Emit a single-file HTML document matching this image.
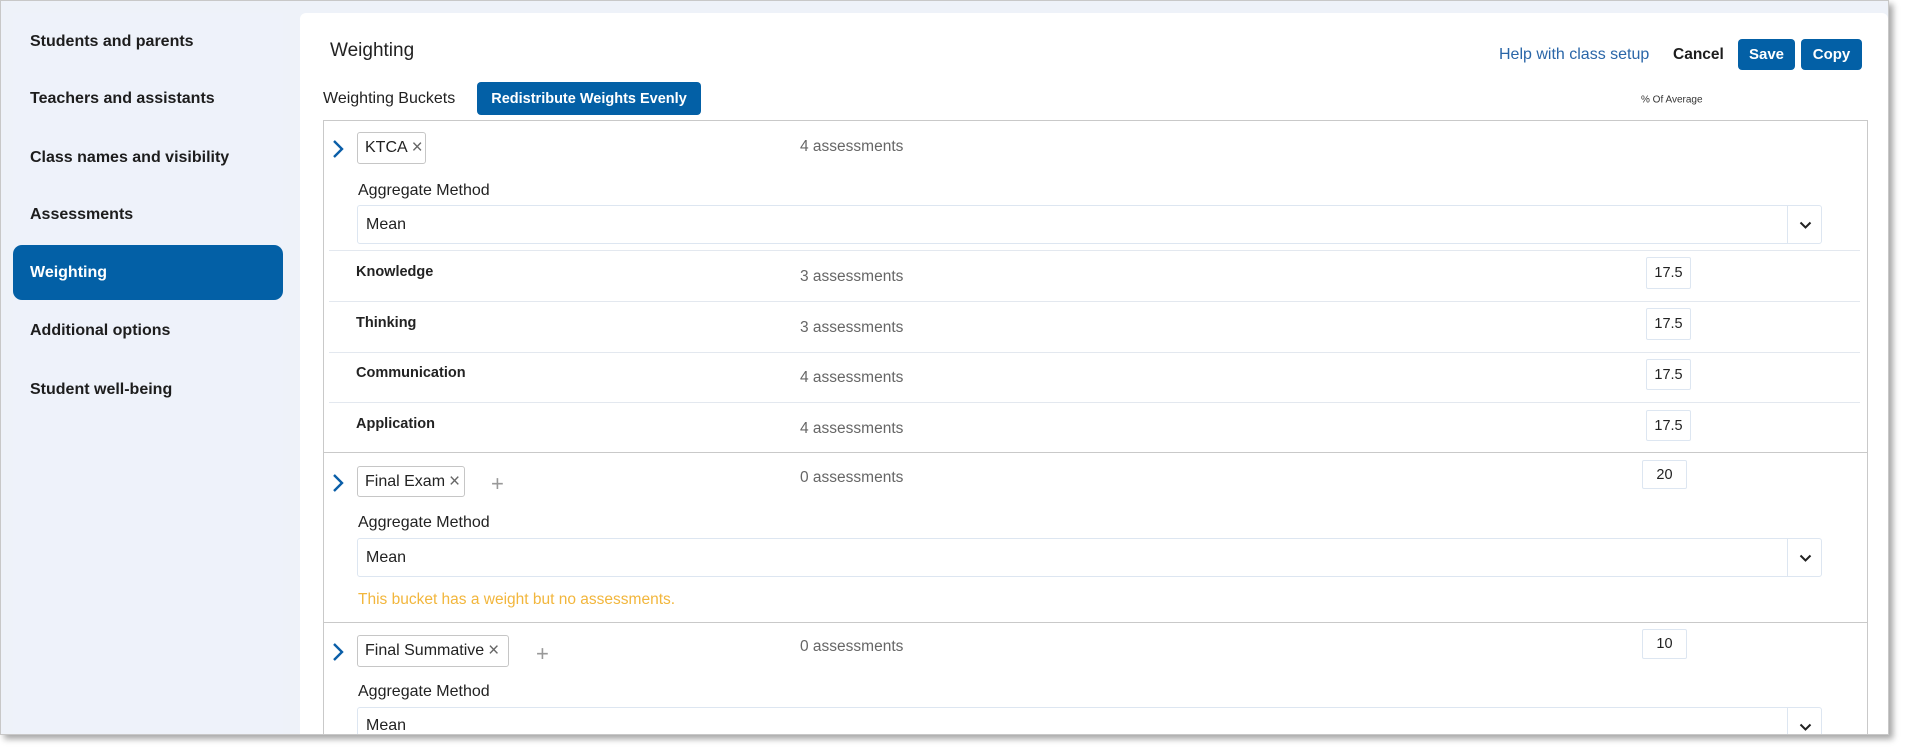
<!DOCTYPE html>
<html><head><meta charset="utf-8"><style>
*{box-sizing:border-box;margin:0;padding:0}
body{width:1905px;height:751px;background:#fff;position:relative;overflow:hidden;font-family:"Liberation Sans",sans-serif;color:#1f2328}
.frame{position:absolute;left:0;top:0;width:1889px;height:735px;background:#eef2f9;border:1px solid #c8c8c8;box-shadow:4px 4px 6px rgba(0,0,0,.35);overflow:hidden}
.a{position:absolute;white-space:nowrap}
.side{position:absolute;left:12px;top:12px;width:270px;height:730px;background:#eef2fa}
.nav{position:absolute;left:29px;font-size:16px;font-weight:bold;color:#1d1d1d;transform:translateY(-50%)}
.active{position:absolute;left:12px;top:244px;width:270px;height:55px;background:#0360a6;border-radius:9px}
.main{position:absolute;left:299px;top:12px;width:1588px;height:740px;background:#fff;border-radius:6px}
.btn{position:absolute;background:#0360a6;color:#fff;font-weight:bold;border-radius:4px;display:flex;align-items:center;justify-content:center}
.tbl{position:absolute;left:322px;top:119px;width:1545px;height:640px;border:1px solid #c9c9c9}
.c{transform:translateY(-50%)}
.tag{position:absolute;left:356px;border:1px solid #c6c6c6;border-radius:3px;background:#fff;font-size:16px;color:#222;display:flex;align-items:center;padding-left:7px}
.tag span{color:#666;font-size:19px;margin-left:4px}
.gray{color:#666;font-size:15.5px}
.lab{font-size:16px;color:#222}
.sel{position:absolute;left:356px;width:1465px;border:1px solid #dde6f1;border-radius:3px;font-size:16px;color:#222;padding-left:8px;display:flex;align-items:center}
.sel .dd{position:absolute;right:0;top:0;bottom:0;width:34px;border-left:1px solid #dde6f1}
.sep{position:absolute;left:328px;width:1531px;height:1px;background:#e3e8ef}
.bsep{position:absolute;left:322px;width:1545px;height:1px;background:#c9c9c9}
.inp{position:absolute;border:1px solid #dde6f1;border-radius:2px;font-size:14.5px;color:#222;display:flex;align-items:center;justify-content:center}
.cat{font-size:14.5px;font-weight:bold;color:#222}
.plus{font-size:22px;color:#999}
</style></head><body>
<div class="frame">
<div class="side"></div>
<div class="active"></div>
<div class="nav" style="top:41px">Students and parents</div>
<div class="nav" style="top:98px">Teachers and assistants</div>
<div class="nav" style="top:157px">Class names and visibility</div>
<div class="nav" style="top:214px">Assessments</div>
<div class="nav" style="top:272px;color:#fff">Weighting</div>
<div class="nav" style="top:330px">Additional options</div>
<div class="nav" style="top:389px">Student well-being</div>

<div class="main"></div>
<div class="a c" style="left:329px;top:50px;font-size:19px;color:#222">Weighting</div>
<div class="a c" style="left:1498px;top:54px;font-size:16px;color:#2a66a8">Help with class setup</div>
<div class="a c" style="left:1672px;top:54px;font-size:15.5px;font-weight:bold;color:#1d1d1d">Cancel</div>
<div class="btn" style="left:1737px;top:38px;width:57px;height:31px;font-size:15px">Save</div>
<div class="btn" style="left:1800px;top:38px;width:61px;height:31px;font-size:15px">Copy</div>
<div class="a c" style="left:322px;top:98px;font-size:16px;color:#222">Weighting Buckets</div>
<div class="btn" style="left:476px;top:81px;width:224px;height:33px;font-size:14.5px">Redistribute Weights Evenly</div>
<div class="a c" style="left:1640px;top:99px;font-size:10px;color:#333">% Of Average</div>

<div class="tbl"></div>
<svg class="a" style="left:331px;top:138px" width="12" height="20"><path d="M2 2 L10 10 L2 18" stroke="#0a5ea8" stroke-width="2.4" fill="none"/></svg>
<div class="tag" style="top:131px;width:69px;height:32px">KTCA<span>×</span></div>
<div class="a c gray" style="left:799px;top:146px">4 assessments</div>
<div class="a c lab" style="left:357px;top:190px">Aggregate Method</div>
<div class="sel" style="top:204px;height:39px">Mean<div class="dd"><svg style="position:absolute;left:11px;top:15px" width="13" height="9"><path d="M1.5 1.5 L6.5 6.5 L11.5 1.5" stroke="#222" stroke-width="2" fill="none"/></svg></div></div>
<div class="sep" style="top:249px"></div>
<div class="a c cat" style="left:355px;top:271px">Knowledge</div>
<div class="a c gray" style="left:799px;top:276px">3 assessments</div>
<div class="inp" style="left:1645px;top:256px;width:45px;height:32px">17.5</div>
<div class="sep" style="top:300px"></div>
<div class="a c cat" style="left:355px;top:322px">Thinking</div>
<div class="a c gray" style="left:799px;top:327px">3 assessments</div>
<div class="inp" style="left:1645px;top:307px;width:45px;height:32px">17.5</div>
<div class="sep" style="top:351px"></div>
<div class="a c cat" style="left:355px;top:372px">Communication</div>
<div class="a c gray" style="left:799px;top:377px">4 assessments</div>
<div class="inp" style="left:1645px;top:358px;width:45px;height:31px">17.5</div>
<div class="sep" style="top:401px"></div>
<div class="a c cat" style="left:355px;top:423px">Application</div>
<div class="a c gray" style="left:799px;top:428px">4 assessments</div>
<div class="inp" style="left:1645px;top:409px;width:45px;height:31px">17.5</div>
<div class="bsep" style="top:451px"></div>
<svg class="a" style="left:331px;top:472px" width="12" height="20"><path d="M2 2 L10 10 L2 18" stroke="#0a5ea8" stroke-width="2.4" fill="none"/></svg>
<div class="tag" style="top:465px;width:108px;height:31px">Final Exam<span>×</span></div>
<div class="a c plus" style="left:490px;top:483px">+</div>
<div class="a c gray" style="left:799px;top:477px">0 assessments</div>
<div class="inp" style="left:1641px;top:459px;width:45px;height:29px">20</div>
<div class="a c lab" style="left:357px;top:522px">Aggregate Method</div>
<div class="sel" style="top:537px;height:39px">Mean<div class="dd"><svg style="position:absolute;left:11px;top:15px" width="13" height="9"><path d="M1.5 1.5 L6.5 6.5 L11.5 1.5" stroke="#222" stroke-width="2" fill="none"/></svg></div></div>
<div class="a c" style="left:357px;top:599px;font-size:15.5px;color:#f2b63c">This bucket has a weight but no assessments.</div>
<div class="bsep" style="top:621px"></div>
<svg class="a" style="left:331px;top:641px" width="12" height="20"><path d="M2 2 L10 10 L2 18" stroke="#0a5ea8" stroke-width="2.4" fill="none"/></svg>
<div class="tag" style="top:634px;width:152px;height:32px">Final Summative<span>×</span></div>
<div class="a c plus" style="left:535px;top:653px">+</div>
<div class="a c gray" style="left:799px;top:646px">0 assessments</div>
<div class="inp" style="left:1641px;top:628px;width:45px;height:30px">10</div>
<div class="a c lab" style="left:357px;top:691px">Aggregate Method</div>
<div class="sel" style="top:706px;height:39px;align-items:flex-start;padding-top:9px">Mean<div class="dd"><svg style="position:absolute;left:11px;top:15px" width="13" height="9"><path d="M1.5 1.5 L6.5 6.5 L11.5 1.5" stroke="#222" stroke-width="2" fill="none"/></svg></div></div>
</div>
</body></html>
